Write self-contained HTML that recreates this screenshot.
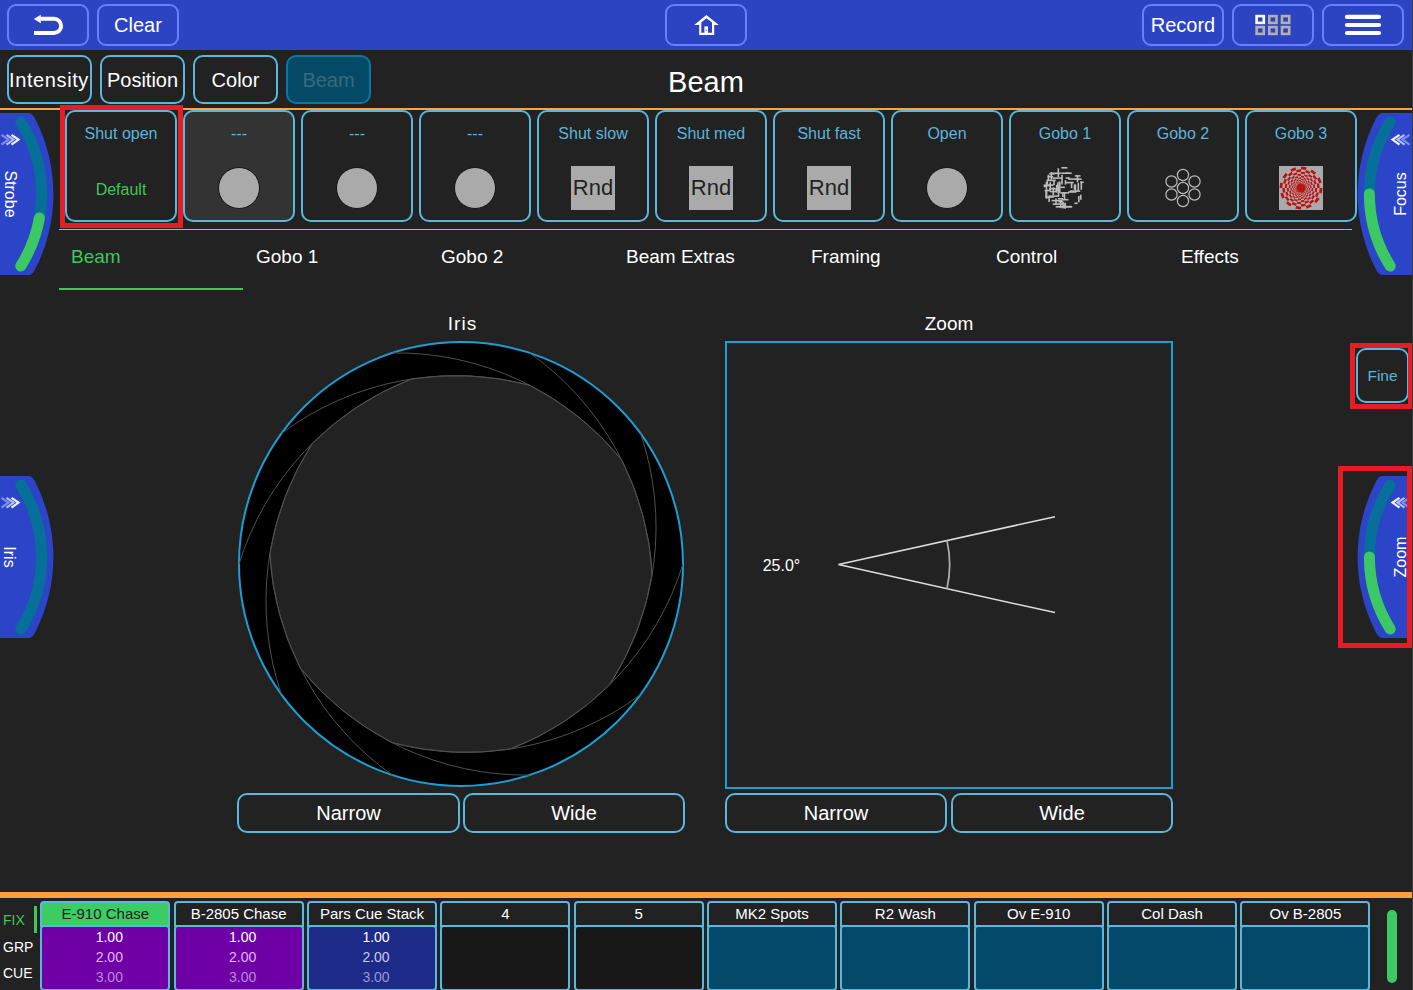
<!DOCTYPE html><html><head><meta charset="utf-8"><title>Beam</title><style>
*{margin:0;padding:0;box-sizing:border-box}
html,body{width:1413px;height:990px;overflow:hidden;background:#222222;font-family:"Liberation Sans",sans-serif;color:#fff}
.a{position:absolute}
.tb{position:absolute;top:4px;height:42px;border:2px solid #6680ff;border-radius:9px}
.tbt{position:absolute;top:0;height:38px;line-height:38px;width:100%;text-align:center;font-size:20px;color:#fff}
.cb{position:absolute;top:55px;height:49px;width:85px;border:2px solid #5ab8dc;border-radius:10px;text-align:center;line-height:47px;font-size:20px;color:#fff}
.tile{position:absolute;top:110px;width:112px;height:112px;border:2px solid #5ab8dc;border-radius:10px}
.tl{position:absolute;left:0;width:108px;top:13px;text-align:center;font-size:16px;color:#5ab4dc;line-height:18px}
.dot{position:absolute;left:33px;top:55px;width:42px;height:42px;border-radius:50%;background:#aaaaaa;border:1.5px solid #141414}
.rnd{position:absolute;left:32px;top:54px;width:44px;height:44px;background:#aaaaaa;color:#222;font-size:22px;line-height:44px;text-align:center}
.tab{position:absolute;top:244.5px;font-size:19px;line-height:24px;color:#fff}
.btn{position:absolute;top:793px;height:40px;border:2px solid #5ab8dc;border-radius:10px;text-align:center;line-height:36px;font-size:20px;color:#fff}
.red{position:absolute;border:5px solid #e81c24}
.pb{position:absolute;top:901px;width:130px;height:89px}
.ph{position:absolute;left:0;top:0;width:130px;height:26px;border:2px solid #5ab8dc;border-radius:4px 4px 0 0;background:#222;text-align:center;font-size:15px;line-height:22px;color:#fff}
.pbd{position:absolute;left:0;top:24px;width:130px;height:66px;border:2px solid #5ab8dc;border-radius:4px;background:#1a1a1a}
.vals{position:absolute;left:4px;top:0px;width:126px;text-align:center;font-size:14px;line-height:20px}
</style></head><body>
<div class="a" style="left:0;top:0;width:1413px;height:50px;background:#2c44c4"></div>
<div class="tb" style="left:7px;width:82px"><svg class="a" style="left:0;top:0" width="78" height="38" viewBox="9 6 78 38"><path d="M40.6 18.8 H54 A7.1 7.1 0 0 1 54 33 H34" fill="none" stroke="#fff" stroke-width="4"/><path d="M33.8 19.1 L40.8 14.8 L40.8 23.2 Z" fill="#fff"/></svg></div>
<div class="tb" style="left:97px;width:82px"><div class="tbt">Clear</div></div>
<div class="tb" style="left:665px;width:82px"><svg class="a" style="left:0;top:0" width="78" height="38" viewBox="667 6 78 38"><path fill-rule="evenodd" d="M694.2 24.9 L706.4 15 L718.8 24.9 L714.2 24.9 L714.2 35 L699.2 35 L699.2 24.9 Z M701.3 22.6 L706.4 18.3 L712 22.6 L712 32.8 L701.3 32.8 Z" fill="#fff"/><rect x="704.4" y="26.4" width="3.6" height="7" fill="#fff"/><rect x="705.8" y="29.6" width="1" height="1.2" fill="#2c44c4"/></svg></div>
<div class="tb" style="left:1142px;width:82px"><div class="tbt">Record</div></div>
<div class="tb" style="left:1232px;width:82px"><svg class="a" style="left:0;top:0" width="78" height="38" viewBox="1234 6 78 38"><rect x="1256.6" y="16.1" width="7.2" height="6.8" fill="none" stroke="#ffffff" stroke-width="2.6"/><rect x="1269.3" y="16.1" width="7.2" height="6.8" fill="none" stroke="#b4b0a8" stroke-width="2.6"/><rect x="1282.0" y="16.1" width="7.2" height="6.8" fill="none" stroke="#b4b0a8" stroke-width="2.6"/><rect x="1256.6" y="27.1" width="7.2" height="6.8" fill="none" stroke="#b4b0a8" stroke-width="2.6"/><rect x="1269.3" y="27.1" width="7.2" height="6.8" fill="none" stroke="#b4b0a8" stroke-width="2.6"/><rect x="1282.0" y="27.1" width="7.2" height="6.8" fill="none" stroke="#b4b0a8" stroke-width="2.6"/></svg></div>
<div class="tb" style="left:1322px;width:82px"><svg class="a" style="left:0;top:0" width="78" height="38" viewBox="1324 6 78 38"><path d="M1347 16.9 H1379 M1347 25 H1379 M1347 33 H1379" stroke="#fff" stroke-width="4.2" stroke-linecap="round"/></svg></div>
<div class="cb" style="left:7px;letter-spacing:0.6px;text-indent:-1px">Intensity</div>
<div class="cb" style="left:100px;">Position</div>
<div class="cb" style="left:193px;">Color</div>
<div class="cb" style="left:286px;background:#044a66;border-color:#0878a8;color:#3a6a7a;line-height:47px">Beam</div>
<div class="a" style="left:600px;top:65px;width:212px;text-align:center;font-size:29px;line-height:34px;color:#fff">Beam</div>
<div class="a" style="left:0;top:108px;width:1413px;height:2px;background:#ffa43e"></div>
<div class="a" style="left:59px;top:228.5px;width:1293px;height:1.5px;background:#ffa43e"></div>
<div class="tile" style="left:65px;"><div class="tl">Shut open</div><div class="tl" style="top:69px;color:#3cc85a">Default</div></div>
<div class="tile" style="left:183px;background:#333333;"><div class="tl">---</div><div class="dot"></div></div>
<div class="tile" style="left:301px;"><div class="tl">---</div><div class="dot"></div></div>
<div class="tile" style="left:419px;"><div class="tl">---</div><div class="dot"></div></div>
<div class="tile" style="left:537px;"><div class="tl">Shut slow</div><div class="rnd">Rnd</div></div>
<div class="tile" style="left:655px;"><div class="tl">Shut med</div><div class="rnd">Rnd</div></div>
<div class="tile" style="left:773px;"><div class="tl">Shut fast</div><div class="rnd">Rnd</div></div>
<div class="tile" style="left:891px;"><div class="tl">Open</div><div class="dot"></div></div>
<div class="tile" style="left:1009px;"><div class="tl">Gobo 1</div><svg class="a" style="left:30px;top:53px" width="46" height="46" viewBox="0 0 46 46"><g stroke="#bcbcbc" stroke-width="1.6"><path d="M11.3 8.3H19.9"/><path d="M24.5 15.2V19.6"/><path d="M2.7 20.2H5.8"/><path d="M17.4 36.7H22.3"/><path d="M24.3 41.8H31.2"/><path d="M35.6 14.2H40.6"/><path d="M15.0 33.6V38.9"/><path d="M24.9 17.6H32.8"/><path d="M30.6 16.9V23.1"/><path d="M21.0 9.8V19.4"/><path d="M12.3 22.3V30.0"/><path d="M27.2 14.1H38.1"/><path d="M17.0 33.8H22.1"/><path d="M29.0 26.1H39.2"/><path d="M27.2 27.0H35.2"/><path d="M21.9 27.7V32.1"/><path d="M36.5 10.6V17.3"/><path d="M2.6 21.4H5.5"/><path d="M7.4 9.7V15.8"/><path d="M5.4 16.9V24.8"/><path d="M33.4 38.3H36.7"/><path d="M11.7 39.1H22.4"/><path d="M6.6 11.7H12.2"/><path d="M24.7 13.0H28.8"/><path d="M17.5 20.5V31.1"/><path d="M19.3 27.9H28.0"/><path d="M39.8 29.7V34.8"/><path d="M18.5 16.4V21.1"/><path d="M8.2 8.8H14.0"/><path d="M6.3 15.2V19.4"/><path d="M24.9 8.2H30.7"/><path d="M17.3 3.3V12.1"/><path d="M19.3 22.3H23.9"/><path d="M11.5 13.1H21.3"/><path d="M20.3 8.2H28.1"/><path d="M24.2 38.1V43.5"/><path d="M13.0 14.8V20.0"/><path d="M21.2 34.7H27.5"/><path d="M37.8 31.0V37.2"/><path d="M8.3 23.7H14.8"/><path d="M7.5 31.1H18.2"/><path d="M39.3 17.3H42.7"/><path d="M10.3 6.9V14.8"/><path d="M37.3 17.9V26.4"/><path d="M5.6 24.6V33.8"/><path d="M33.5 19.5V24.7"/><path d="M10.6 35.6H21.4"/><path d="M14.7 41.8H23.4"/><path d="M8.1 31.3V37.1"/><path d="M14.3 25.0H19.2"/><path d="M24.1 37.7V43.5"/><path d="M33.8 10.9H39.5"/><path d="M9.2 26.6H15.0"/><path d="M16.9 17.2V25.3"/><path d="M19.7 36.8V43.2"/><path d="M20.4 2.8H26.4"/><path d="M9.2 17.3V26.4"/><path d="M15.7 19.8V27.7"/><path d="M3.6 25.5H9.3"/><path d="M34.4 19.4V27.3"/><path d="M40.3 16.5V24.8"/><path d="M23.5 27.5V34.7"/><path d="M22.1 37.1V43.5"/><path d="M20.6 41.6H30.4"/><path d="M4.9 20.6H9.4"/><path d="M5.1 25.4V32.9"/><path d="M4.6 32.1H12.8"/><path d="M18.7 17.0V27.9"/><path d="M5.0 20.1H12.6"/><path d="M5.7 15.4H14.7"/></g></svg></div>
<div class="tile" style="left:1127px;"><div class="tl">Gobo 2</div><svg class="a" style="left:31px;top:53px" width="46" height="46" viewBox="-23 -23 46 46"><circle cx="0.0" cy="0.0" r="5.6" fill="none" stroke="#bdbdbd" stroke-width="1.2"/><circle cx="0.0" cy="-13.0" r="5.6" fill="none" stroke="#bdbdbd" stroke-width="1.2"/><circle cx="0.0" cy="13.0" r="5.6" fill="none" stroke="#bdbdbd" stroke-width="1.2"/><circle cx="-11.5" cy="-6.5" r="5.6" fill="none" stroke="#bdbdbd" stroke-width="1.2"/><circle cx="11.5" cy="-6.5" r="5.6" fill="none" stroke="#bdbdbd" stroke-width="1.2"/><circle cx="-11.5" cy="6.5" r="5.6" fill="none" stroke="#bdbdbd" stroke-width="1.2"/><circle cx="11.5" cy="6.5" r="5.6" fill="none" stroke="#bdbdbd" stroke-width="1.2"/></svg></div>
<div class="tile" style="left:1245px;"><div class="tl">Gobo 3</div><svg class="a" style="left:32px;top:54px" width="44" height="44" viewBox="-22 -22 44 44"><rect x="-22" y="-22" width="44" height="44" fill="#aaaaaa"/><g fill="#c01010"><path d="M18.70 0.00L21.50 0.00L20.77 5.56L18.07 4.84Z"/><path d="M16.20 9.35L18.62 10.75L15.20 15.20L13.23 13.23Z"/><path d="M9.35 16.20L10.75 18.62L5.56 20.77L4.84 18.07Z"/><path d="M0.00 18.70L0.00 21.50L-5.56 20.77L-4.84 18.07Z"/><path d="M-9.35 16.20L-10.75 18.62L-15.20 15.20L-13.23 13.23Z"/><path d="M-16.20 9.35L-18.62 10.75L-20.77 5.56L-18.07 4.84Z"/><path d="M-18.70 0.00L-21.50 0.00L-20.77 -5.56L-18.07 -4.84Z"/><path d="M-16.20 -9.35L-18.62 -10.75L-15.20 -15.20L-13.23 -13.23Z"/><path d="M-9.35 -16.20L-10.75 -18.62L-5.56 -20.77L-4.84 -18.07Z"/><path d="M-0.00 -18.70L-0.00 -21.50L5.56 -20.77L4.84 -18.07Z"/><path d="M9.35 -16.20L10.75 -18.62L15.20 -15.20L13.23 -13.23Z"/><path d="M16.20 -9.35L18.62 -10.75L20.77 -5.56L18.07 -4.84Z"/><path d="M15.72 4.21L18.07 4.84L16.20 9.35L14.09 8.14Z"/><path d="M11.51 11.51L13.23 13.23L9.35 16.20L8.14 14.09Z"/><path d="M4.21 15.72L4.84 18.07L0.00 18.70L0.00 16.27Z"/><path d="M-4.21 15.72L-4.84 18.07L-9.35 16.20L-8.14 14.09Z"/><path d="M-11.51 11.51L-13.23 13.23L-16.20 9.35L-14.09 8.14Z"/><path d="M-15.72 4.21L-18.07 4.84L-18.70 0.00L-16.27 0.00Z"/><path d="M-15.72 -4.21L-18.07 -4.84L-16.20 -9.35L-14.09 -8.14Z"/><path d="M-11.51 -11.51L-13.23 -13.23L-9.35 -16.20L-8.14 -14.09Z"/><path d="M-4.21 -15.72L-4.84 -18.07L-0.00 -18.70L-0.00 -16.27Z"/><path d="M4.21 -15.72L4.84 -18.07L9.35 -16.20L8.14 -14.09Z"/><path d="M11.51 -11.51L13.23 -13.23L16.20 -9.35L14.09 -8.14Z"/><path d="M15.72 -4.21L18.07 -4.84L18.70 -0.00L16.27 -0.00Z"/><path d="M14.16 0.00L16.27 0.00L15.72 4.21L13.68 3.66Z"/><path d="M12.26 7.08L14.09 8.14L11.51 11.51L10.01 10.01Z"/><path d="M7.08 12.26L8.14 14.09L4.21 15.72L3.66 13.68Z"/><path d="M0.00 14.16L0.00 16.27L-4.21 15.72L-3.66 13.68Z"/><path d="M-7.08 12.26L-8.14 14.09L-11.51 11.51L-10.01 10.01Z"/><path d="M-12.26 7.08L-14.09 8.14L-15.72 4.21L-13.68 3.66Z"/><path d="M-14.16 0.00L-16.27 0.00L-15.72 -4.21L-13.68 -3.66Z"/><path d="M-12.26 -7.08L-14.09 -8.14L-11.51 -11.51L-10.01 -10.01Z"/><path d="M-7.08 -12.26L-8.14 -14.09L-4.21 -15.72L-3.66 -13.68Z"/><path d="M-0.00 -14.16L-0.00 -16.27L4.21 -15.72L3.66 -13.68Z"/><path d="M7.08 -12.26L8.14 -14.09L11.51 -11.51L10.01 -10.01Z"/><path d="M12.26 -7.08L14.09 -8.14L15.72 -4.21L13.68 -3.66Z"/><path d="M11.90 3.19L13.68 3.66L12.26 7.08L10.67 6.16Z"/><path d="M8.71 8.71L10.01 10.01L7.08 12.26L6.16 10.67Z"/><path d="M3.19 11.90L3.66 13.68L0.00 14.16L0.00 12.32Z"/><path d="M-3.19 11.90L-3.66 13.68L-7.08 12.26L-6.16 10.67Z"/><path d="M-8.71 8.71L-10.01 10.01L-12.26 7.08L-10.67 6.16Z"/><path d="M-11.90 3.19L-13.68 3.66L-14.16 0.00L-12.32 0.00Z"/><path d="M-11.90 -3.19L-13.68 -3.66L-12.26 -7.08L-10.67 -6.16Z"/><path d="M-8.71 -8.71L-10.01 -10.01L-7.08 -12.26L-6.16 -10.67Z"/><path d="M-3.19 -11.90L-3.66 -13.68L-0.00 -14.16L-0.00 -12.32Z"/><path d="M3.19 -11.90L3.66 -13.68L7.08 -12.26L6.16 -10.67Z"/><path d="M8.71 -8.71L10.01 -10.01L12.26 -7.08L10.67 -6.16Z"/><path d="M11.90 -3.19L13.68 -3.66L14.16 -0.00L12.32 -0.00Z"/><path d="M10.72 0.00L12.32 0.00L11.90 3.19L10.35 2.77Z"/><path d="M9.28 5.36L10.67 6.16L8.71 8.71L7.58 7.58Z"/><path d="M5.36 9.28L6.16 10.67L3.19 11.90L2.77 10.35Z"/><path d="M0.00 10.72L0.00 12.32L-3.19 11.90L-2.77 10.35Z"/><path d="M-5.36 9.28L-6.16 10.67L-8.71 8.71L-7.58 7.58Z"/><path d="M-9.28 5.36L-10.67 6.16L-11.90 3.19L-10.35 2.77Z"/><path d="M-10.72 0.00L-12.32 0.00L-11.90 -3.19L-10.35 -2.77Z"/><path d="M-9.28 -5.36L-10.67 -6.16L-8.71 -8.71L-7.58 -7.58Z"/><path d="M-5.36 -9.28L-6.16 -10.67L-3.19 -11.90L-2.77 -10.35Z"/><path d="M-0.00 -10.72L-0.00 -12.32L3.19 -11.90L2.77 -10.35Z"/><path d="M5.36 -9.28L6.16 -10.67L8.71 -8.71L7.58 -7.58Z"/><path d="M9.28 -5.36L10.67 -6.16L11.90 -3.19L10.35 -2.77Z"/><path d="M9.01 2.41L10.35 2.77L9.28 5.36L8.07 4.66Z"/><path d="M6.59 6.59L7.58 7.58L5.36 9.28L4.66 8.07Z"/><path d="M2.41 9.01L2.77 10.35L0.00 10.72L0.00 9.32Z"/><path d="M-2.41 9.01L-2.77 10.35L-5.36 9.28L-4.66 8.07Z"/><path d="M-6.59 6.59L-7.58 7.58L-9.28 5.36L-8.07 4.66Z"/><path d="M-9.01 2.41L-10.35 2.77L-10.72 0.00L-9.32 0.00Z"/><path d="M-9.01 -2.41L-10.35 -2.77L-9.28 -5.36L-8.07 -4.66Z"/><path d="M-6.59 -6.59L-7.58 -7.58L-5.36 -9.28L-4.66 -8.07Z"/><path d="M-2.41 -9.01L-2.77 -10.35L-0.00 -10.72L-0.00 -9.32Z"/><path d="M2.41 -9.01L2.77 -10.35L5.36 -9.28L4.66 -8.07Z"/><path d="M6.59 -6.59L7.58 -7.58L9.28 -5.36L8.07 -4.66Z"/><path d="M9.01 -2.41L10.35 -2.77L10.72 -0.00L9.32 -0.00Z"/><path d="M8.11 0.00L9.32 0.00L9.01 2.41L7.83 2.10Z"/><path d="M7.02 4.06L8.07 4.66L6.59 6.59L5.74 5.74Z"/><path d="M4.06 7.02L4.66 8.07L2.41 9.01L2.10 7.83Z"/><path d="M0.00 8.11L0.00 9.32L-2.41 9.01L-2.10 7.83Z"/><path d="M-4.06 7.02L-4.66 8.07L-6.59 6.59L-5.74 5.74Z"/><path d="M-7.02 4.06L-8.07 4.66L-9.01 2.41L-7.83 2.10Z"/><path d="M-8.11 0.00L-9.32 0.00L-9.01 -2.41L-7.83 -2.10Z"/><path d="M-7.02 -4.06L-8.07 -4.66L-6.59 -6.59L-5.74 -5.74Z"/><path d="M-4.06 -7.02L-4.66 -8.07L-2.41 -9.01L-2.10 -7.83Z"/><path d="M-0.00 -8.11L-0.00 -9.32L2.41 -9.01L2.10 -7.83Z"/><path d="M4.06 -7.02L4.66 -8.07L6.59 -6.59L5.74 -5.74Z"/><path d="M7.02 -4.06L8.07 -4.66L9.01 -2.41L7.83 -2.10Z"/><path d="M6.82 1.83L7.83 2.10L7.02 4.06L6.11 3.53Z"/><path d="M4.99 4.99L5.74 5.74L4.06 7.02L3.53 6.11Z"/><path d="M1.83 6.82L2.10 7.83L0.00 8.11L0.00 7.06Z"/><path d="M-1.83 6.82L-2.10 7.83L-4.06 7.02L-3.53 6.11Z"/><path d="M-4.99 4.99L-5.74 5.74L-7.02 4.06L-6.11 3.53Z"/><path d="M-6.82 1.83L-7.83 2.10L-8.11 0.00L-7.06 0.00Z"/><path d="M-6.82 -1.83L-7.83 -2.10L-7.02 -4.06L-6.11 -3.53Z"/><path d="M-4.99 -4.99L-5.74 -5.74L-4.06 -7.02L-3.53 -6.11Z"/><path d="M-1.83 -6.82L-2.10 -7.83L-0.00 -8.11L-0.00 -7.06Z"/><path d="M1.83 -6.82L2.10 -7.83L4.06 -7.02L3.53 -6.11Z"/><path d="M4.99 -4.99L5.74 -5.74L7.02 -4.06L6.11 -3.53Z"/><path d="M6.82 -1.83L7.83 -2.10L8.11 -0.00L7.06 -0.00Z"/><path d="M6.14 0.00L7.06 0.00L6.82 1.83L5.93 1.59Z"/><path d="M5.32 3.07L6.11 3.53L4.99 4.99L4.34 4.34Z"/><path d="M3.07 5.32L3.53 6.11L1.83 6.82L1.59 5.93Z"/><path d="M0.00 6.14L0.00 7.06L-1.83 6.82L-1.59 5.93Z"/><path d="M-3.07 5.32L-3.53 6.11L-4.99 4.99L-4.34 4.34Z"/><path d="M-5.32 3.07L-6.11 3.53L-6.82 1.83L-5.93 1.59Z"/><path d="M-6.14 0.00L-7.06 0.00L-6.82 -1.83L-5.93 -1.59Z"/><path d="M-5.32 -3.07L-6.11 -3.53L-4.99 -4.99L-4.34 -4.34Z"/><path d="M-3.07 -5.32L-3.53 -6.11L-1.83 -6.82L-1.59 -5.93Z"/><path d="M-0.00 -6.14L-0.00 -7.06L1.83 -6.82L1.59 -5.93Z"/><path d="M3.07 -5.32L3.53 -6.11L4.99 -4.99L4.34 -4.34Z"/><path d="M5.32 -3.07L6.11 -3.53L6.82 -1.83L5.93 -1.59Z"/><path d="M5.16 1.38L5.93 1.59L5.32 3.07L4.63 2.67Z"/><path d="M3.78 3.78L4.34 4.34L3.07 5.32L2.67 4.63Z"/><path d="M1.38 5.16L1.59 5.93L0.00 6.14L0.00 5.34Z"/><path d="M-1.38 5.16L-1.59 5.93L-3.07 5.32L-2.67 4.63Z"/><path d="M-3.78 3.78L-4.34 4.34L-5.32 3.07L-4.63 2.67Z"/><path d="M-5.16 1.38L-5.93 1.59L-6.14 0.00L-5.34 0.00Z"/><path d="M-5.16 -1.38L-5.93 -1.59L-5.32 -3.07L-4.63 -2.67Z"/><path d="M-3.78 -3.78L-4.34 -4.34L-3.07 -5.32L-2.67 -4.63Z"/><path d="M-1.38 -5.16L-1.59 -5.93L-0.00 -6.14L-0.00 -5.34Z"/><path d="M1.38 -5.16L1.59 -5.93L3.07 -5.32L2.67 -4.63Z"/><path d="M3.78 -3.78L4.34 -4.34L5.32 -3.07L4.63 -2.67Z"/><path d="M5.16 -1.38L5.93 -1.59L6.14 -0.00L5.34 -0.00Z"/><path d="M4.65 0.00L5.34 0.00L5.16 1.38L4.49 1.20Z"/><path d="M4.02 2.32L4.63 2.67L3.78 3.78L3.29 3.29Z"/><path d="M2.32 4.02L2.67 4.63L1.38 5.16L1.20 4.49Z"/><path d="M0.00 4.65L0.00 5.34L-1.38 5.16L-1.20 4.49Z"/><path d="M-2.32 4.02L-2.67 4.63L-3.78 3.78L-3.29 3.29Z"/><path d="M-4.02 2.32L-4.63 2.67L-5.16 1.38L-4.49 1.20Z"/><path d="M-4.65 0.00L-5.34 0.00L-5.16 -1.38L-4.49 -1.20Z"/><path d="M-4.02 -2.32L-4.63 -2.67L-3.78 -3.78L-3.29 -3.29Z"/><path d="M-2.32 -4.02L-2.67 -4.63L-1.38 -5.16L-1.20 -4.49Z"/><path d="M-0.00 -4.65L-0.00 -5.34L1.38 -5.16L1.20 -4.49Z"/><path d="M2.32 -4.02L2.67 -4.63L3.78 -3.78L3.29 -3.29Z"/><path d="M4.02 -2.32L4.63 -2.67L5.16 -1.38L4.49 -1.20Z"/><path d="M3.90 1.05L4.49 1.20L4.02 2.32L3.50 2.02Z"/><path d="M2.86 2.86L3.29 3.29L2.32 4.02L2.02 3.50Z"/><path d="M1.05 3.90L1.20 4.49L0.00 4.65L0.00 4.04Z"/><path d="M-1.05 3.90L-1.20 4.49L-2.32 4.02L-2.02 3.50Z"/><path d="M-2.86 2.86L-3.29 3.29L-4.02 2.32L-3.50 2.02Z"/><path d="M-3.90 1.05L-4.49 1.20L-4.65 0.00L-4.04 0.00Z"/><path d="M-3.90 -1.05L-4.49 -1.20L-4.02 -2.32L-3.50 -2.02Z"/><path d="M-2.86 -2.86L-3.29 -3.29L-2.32 -4.02L-2.02 -3.50Z"/><path d="M-1.05 -3.90L-1.20 -4.49L-0.00 -4.65L-0.00 -4.04Z"/><path d="M1.05 -3.90L1.20 -4.49L2.32 -4.02L2.02 -3.50Z"/><path d="M2.86 -2.86L3.29 -3.29L4.02 -2.32L3.50 -2.02Z"/><path d="M3.90 -1.05L4.49 -1.20L4.65 -0.00L4.04 -0.00Z"/><path d="M3.52 0.00L4.04 0.00L3.90 1.05L3.40 0.91Z"/><path d="M3.05 1.76L3.50 2.02L2.86 2.86L2.49 2.49Z"/><path d="M1.76 3.05L2.02 3.50L1.05 3.90L0.91 3.40Z"/><path d="M0.00 3.52L0.00 4.04L-1.05 3.90L-0.91 3.40Z"/><path d="M-1.76 3.05L-2.02 3.50L-2.86 2.86L-2.49 2.49Z"/><path d="M-3.05 1.76L-3.50 2.02L-3.90 1.05L-3.40 0.91Z"/><path d="M-3.52 0.00L-4.04 0.00L-3.90 -1.05L-3.40 -0.91Z"/><path d="M-3.05 -1.76L-3.50 -2.02L-2.86 -2.86L-2.49 -2.49Z"/><path d="M-1.76 -3.05L-2.02 -3.50L-1.05 -3.90L-0.91 -3.40Z"/><path d="M-0.00 -3.52L-0.00 -4.04L1.05 -3.90L0.91 -3.40Z"/><path d="M1.76 -3.05L2.02 -3.50L2.86 -2.86L2.49 -2.49Z"/><path d="M3.05 -1.76L3.50 -2.02L3.90 -1.05L3.40 -0.91Z"/><path d="M2.96 0.79L3.40 0.91L3.05 1.76L2.65 1.53Z"/><path d="M2.16 2.16L2.49 2.49L1.76 3.05L1.53 2.65Z"/><path d="M0.79 2.96L0.91 3.40L0.00 3.52L0.00 3.06Z"/><path d="M-0.79 2.96L-0.91 3.40L-1.76 3.05L-1.53 2.65Z"/><path d="M-2.16 2.16L-2.49 2.49L-3.05 1.76L-2.65 1.53Z"/><path d="M-2.96 0.79L-3.40 0.91L-3.52 0.00L-3.06 0.00Z"/><path d="M-2.96 -0.79L-3.40 -0.91L-3.05 -1.76L-2.65 -1.53Z"/><path d="M-2.16 -2.16L-2.49 -2.49L-1.76 -3.05L-1.53 -2.65Z"/><path d="M-0.79 -2.96L-0.91 -3.40L-0.00 -3.52L-0.00 -3.06Z"/><path d="M0.79 -2.96L0.91 -3.40L1.76 -3.05L1.53 -2.65Z"/><path d="M2.16 -2.16L2.49 -2.49L3.05 -1.76L2.65 -1.53Z"/><path d="M2.96 -0.79L3.40 -0.91L3.52 -0.00L3.06 -0.00Z"/><path d="M2.66 0.00L3.06 0.00L2.96 0.79L2.57 0.69Z"/><path d="M2.31 1.33L2.65 1.53L2.16 2.16L1.88 1.88Z"/><path d="M1.33 2.31L1.53 2.65L0.79 2.96L0.69 2.57Z"/><path d="M0.00 2.66L0.00 3.06L-0.79 2.96L-0.69 2.57Z"/><path d="M-1.33 2.31L-1.53 2.65L-2.16 2.16L-1.88 1.88Z"/><path d="M-2.31 1.33L-2.65 1.53L-2.96 0.79L-2.57 0.69Z"/><path d="M-2.66 0.00L-3.06 0.00L-2.96 -0.79L-2.57 -0.69Z"/><path d="M-2.31 -1.33L-2.65 -1.53L-2.16 -2.16L-1.88 -1.88Z"/><path d="M-1.33 -2.31L-1.53 -2.65L-0.79 -2.96L-0.69 -2.57Z"/><path d="M-0.00 -2.66L-0.00 -3.06L0.79 -2.96L0.69 -2.57Z"/><path d="M1.33 -2.31L1.53 -2.65L2.16 -2.16L1.88 -1.88Z"/><path d="M2.31 -1.33L2.65 -1.53L2.96 -0.79L2.57 -0.69Z"/><path d="M2.24 0.60L2.57 0.69L2.31 1.33L2.01 1.16Z"/><path d="M1.64 1.64L1.88 1.88L1.33 2.31L1.16 2.01Z"/><path d="M0.60 2.24L0.69 2.57L0.00 2.66L0.00 2.32Z"/><path d="M-0.60 2.24L-0.69 2.57L-1.33 2.31L-1.16 2.01Z"/><path d="M-1.64 1.64L-1.88 1.88L-2.31 1.33L-2.01 1.16Z"/><path d="M-2.24 0.60L-2.57 0.69L-2.66 0.00L-2.32 0.00Z"/><path d="M-2.24 -0.60L-2.57 -0.69L-2.31 -1.33L-2.01 -1.16Z"/><path d="M-1.64 -1.64L-1.88 -1.88L-1.33 -2.31L-1.16 -2.01Z"/><path d="M-0.60 -2.24L-0.69 -2.57L-0.00 -2.66L-0.00 -2.32Z"/><path d="M0.60 -2.24L0.69 -2.57L1.33 -2.31L1.16 -2.01Z"/><path d="M1.64 -1.64L1.88 -1.88L2.31 -1.33L2.01 -1.16Z"/><path d="M2.24 -0.60L2.57 -0.69L2.66 -0.00L2.32 -0.00Z"/><path d="M2.01 0.00L2.32 0.00L2.24 0.60L1.95 0.52Z"/><path d="M1.75 1.01L2.01 1.16L1.64 1.64L1.42 1.42Z"/><path d="M1.01 1.75L1.16 2.01L0.60 2.24L0.52 1.95Z"/><path d="M0.00 2.01L0.00 2.32L-0.60 2.24L-0.52 1.95Z"/><path d="M-1.01 1.75L-1.16 2.01L-1.64 1.64L-1.42 1.42Z"/><path d="M-1.75 1.01L-2.01 1.16L-2.24 0.60L-1.95 0.52Z"/><path d="M-2.01 0.00L-2.32 0.00L-2.24 -0.60L-1.95 -0.52Z"/><path d="M-1.75 -1.01L-2.01 -1.16L-1.64 -1.64L-1.42 -1.42Z"/><path d="M-1.01 -1.75L-1.16 -2.01L-0.60 -2.24L-0.52 -1.95Z"/><path d="M-0.00 -2.01L-0.00 -2.32L0.60 -2.24L0.52 -1.95Z"/><path d="M1.01 -1.75L1.16 -2.01L1.64 -1.64L1.42 -1.42Z"/><path d="M1.75 -1.01L2.01 -1.16L2.24 -0.60L1.95 -0.52Z"/><path d="M1.69 0.45L1.95 0.52L1.75 1.01L1.52 0.88Z"/><path d="M1.24 1.24L1.42 1.42L1.01 1.75L0.88 1.52Z"/><path d="M0.45 1.69L0.52 1.95L0.00 2.01L0.00 1.75Z"/><path d="M-0.45 1.69L-0.52 1.95L-1.01 1.75L-0.88 1.52Z"/><path d="M-1.24 1.24L-1.42 1.42L-1.75 1.01L-1.52 0.88Z"/><path d="M-1.69 0.45L-1.95 0.52L-2.01 0.00L-1.75 0.00Z"/><path d="M-1.69 -0.45L-1.95 -0.52L-1.75 -1.01L-1.52 -0.88Z"/><path d="M-1.24 -1.24L-1.42 -1.42L-1.01 -1.75L-0.88 -1.52Z"/><path d="M-0.45 -1.69L-0.52 -1.95L-0.00 -2.01L-0.00 -1.75Z"/><path d="M0.45 -1.69L0.52 -1.95L1.01 -1.75L0.88 -1.52Z"/><path d="M1.24 -1.24L1.42 -1.42L1.75 -1.01L1.52 -0.88Z"/><path d="M1.69 -0.45L1.95 -0.52L2.01 -0.00L1.75 -0.00Z"/><path d="M1.53 0.00L1.75 0.00L1.69 0.45L1.47 0.39Z"/><path d="M1.32 0.76L1.52 0.88L1.24 1.24L1.08 1.08Z"/><path d="M0.76 1.32L0.88 1.52L0.45 1.69L0.39 1.47Z"/><path d="M0.00 1.53L0.00 1.75L-0.45 1.69L-0.39 1.47Z"/><path d="M-0.76 1.32L-0.88 1.52L-1.24 1.24L-1.08 1.08Z"/><path d="M-1.32 0.76L-1.52 0.88L-1.69 0.45L-1.47 0.39Z"/><path d="M-1.53 0.00L-1.75 0.00L-1.69 -0.45L-1.47 -0.39Z"/><path d="M-1.32 -0.76L-1.52 -0.88L-1.24 -1.24L-1.08 -1.08Z"/><path d="M-0.76 -1.32L-0.88 -1.52L-0.45 -1.69L-0.39 -1.47Z"/><path d="M-0.00 -1.53L-0.00 -1.75L0.45 -1.69L0.39 -1.47Z"/><path d="M0.76 -1.32L0.88 -1.52L1.24 -1.24L1.08 -1.08Z"/><path d="M1.32 -0.76L1.52 -0.88L1.69 -0.45L1.47 -0.39Z"/><path d="M1.28 0.34L1.47 0.39L1.32 0.76L1.15 0.66Z"/><path d="M0.94 0.94L1.08 1.08L0.76 1.32L0.66 1.15Z"/><path d="M0.34 1.28L0.39 1.47L0.00 1.53L0.00 1.33Z"/><path d="M-0.34 1.28L-0.39 1.47L-0.76 1.32L-0.66 1.15Z"/><path d="M-0.94 0.94L-1.08 1.08L-1.32 0.76L-1.15 0.66Z"/><path d="M-1.28 0.34L-1.47 0.39L-1.53 0.00L-1.33 0.00Z"/><path d="M-1.28 -0.34L-1.47 -0.39L-1.32 -0.76L-1.15 -0.66Z"/><path d="M-0.94 -0.94L-1.08 -1.08L-0.76 -1.32L-0.66 -1.15Z"/><path d="M-0.34 -1.28L-0.39 -1.47L-0.00 -1.53L-0.00 -1.33Z"/><path d="M0.34 -1.28L0.39 -1.47L0.76 -1.32L0.66 -1.15Z"/><path d="M0.94 -0.94L1.08 -1.08L1.32 -0.76L1.15 -0.66Z"/><path d="M1.28 -0.34L1.47 -0.39L1.53 -0.00L1.33 -0.00Z"/><path d="M1.15 0.00L1.33 0.00L1.28 0.34L1.12 0.30Z"/><path d="M1.00 0.58L1.15 0.66L0.94 0.94L0.82 0.82Z"/><path d="M0.58 1.00L0.66 1.15L0.34 1.28L0.30 1.12Z"/><path d="M0.00 1.15L0.00 1.33L-0.34 1.28L-0.30 1.12Z"/><path d="M-0.58 1.00L-0.66 1.15L-0.94 0.94L-0.82 0.82Z"/><path d="M-1.00 0.58L-1.15 0.66L-1.28 0.34L-1.12 0.30Z"/><path d="M-1.15 0.00L-1.33 0.00L-1.28 -0.34L-1.12 -0.30Z"/><path d="M-1.00 -0.58L-1.15 -0.66L-0.94 -0.94L-0.82 -0.82Z"/><path d="M-0.58 -1.00L-0.66 -1.15L-0.34 -1.28L-0.30 -1.12Z"/><path d="M-0.00 -1.15L-0.00 -1.33L0.34 -1.28L0.30 -1.12Z"/><path d="M0.58 -1.00L0.66 -1.15L0.94 -0.94L0.82 -0.82Z"/><path d="M1.00 -0.58L1.15 -0.66L1.28 -0.34L1.12 -0.30Z"/><circle r="4.6" fill="#b81414"/></g></svg></div>
<div class="tab" style="left:71px;color:#3cc85a">Beam</div>
<div class="tab" style="left:256px;color:#fff">Gobo 1</div>
<div class="tab" style="left:441px;color:#fff">Gobo 2</div>
<div class="tab" style="left:626px;color:#fff">Beam Extras</div>
<div class="tab" style="left:811px;color:#fff">Framing</div>
<div class="tab" style="left:996px;color:#fff">Control</div>
<div class="tab" style="left:1181px;color:#fff">Effects</div>
<div class="a" style="left:59px;top:287.5px;width:184px;height:2.5px;background:#3cc85a"></div>
<div class="a" style="left:362px;top:312px;width:200px;text-align:center;font-size:19px;line-height:24px;letter-spacing:1px;text-indent:1px">Iris</div>
<svg class="a" style="left:0;top:0" width="1413" height="990"><circle cx="461" cy="564" r="222" fill="#000" stroke="#1c9ed2" stroke-width="2"/><path d="M510.6 749.0 A291.2 291.2 0 0 1 392.4 742.8 A291.2 291.2 0 0 1 300.4 668.3 A291.2 291.2 0 0 1 269.8 554.0 A291.2 291.2 0 0 1 312.2 443.5 A291.2 291.2 0 0 1 411.4 379.0 A291.2 291.2 0 0 1 529.6 385.2 A291.2 291.2 0 0 1 621.6 459.7 A291.2 291.2 0 0 1 652.2 574.0 A291.2 291.2 0 0 1 609.8 684.5 A291.2 291.2 0 0 1 510.6 749.0 Z" fill="#222222" stroke="#505050" stroke-width="1"/><path d="M683.0 564.0 A291.2 291.2 0 0 1 510.6 749.0 M640.6 694.5 A291.2 291.2 0 0 1 392.4 742.8 M529.6 775.1 A291.2 291.2 0 0 1 300.4 668.3 M392.4 775.1 A291.2 291.2 0 0 1 269.8 554.0 M281.4 694.5 A291.2 291.2 0 0 1 312.2 443.5 M239.0 564.0 A291.2 291.2 0 0 1 411.4 379.0 M281.4 433.5 A291.2 291.2 0 0 1 529.6 385.2 M392.4 352.9 A291.2 291.2 0 0 1 621.6 459.7 M529.6 352.9 A291.2 291.2 0 0 1 652.2 574.0 M640.6 433.5 A291.2 291.2 0 0 1 609.8 684.5" fill="none" stroke="#505050" stroke-width="1"/></svg>
<div class="a" style="left:849px;top:312px;width:200px;text-align:center;font-size:19px;line-height:24px">Zoom</div>
<div class="a" style="left:725px;top:341px;width:448px;height:448px;border:2px solid #1c9ed2"></div>
<svg class="a" style="left:0;top:0" width="1413" height="990"><path d="M1055 516.7 L838.5 564.6 L1055 612.6" fill="none" stroke="#dddddd" stroke-width="1.5"/><path d="M947 540.6 A110.6 110.6 0 0 1 947 588.6" fill="none" stroke="#aaaaaa" stroke-width="1.8"/></svg>
<div class="a" style="left:741.5px;top:556px;width:80px;text-align:center;font-size:16px;line-height:20px">25.0°</div>
<div class="btn" style="left:237px;width:223px">Narrow</div>
<div class="btn" style="left:463px;width:222px">Wide</div>
<div class="btn" style="left:725px;width:222px">Narrow</div>
<div class="btn" style="left:951px;width:222px">Wide</div>
<svg class="a" style="left:0;top:113px" width="60" height="164" viewBox="0 0 60 164"><g><path d="M0 0 H28.5 Q32 0 34.8 5 A164.6 164.6 0 0 1 34.8 157 Q32 162 28.5 162 H0 Z" fill="#2c44c8"/><path d="M20.8 9 A135 135 0 0 1 20.8 153" fill="none" stroke="#077098" stroke-width="11" stroke-linecap="round"/><path d="M39.4 105 A135 135 0 0 1 20.8 153" fill="none" stroke="#3cc864" stroke-width="11" stroke-linecap="round"/><path d="M1.5 134.8 L8.5 139.6 L1.5 144.6" fill="none" stroke="#7f8ee8" stroke-width="2.2" transform="translate(0,-113)"/><path d="M6.5 134.8 L13.5 139.6 L6.5 144.6" fill="none" stroke="#b4bdf2" stroke-width="2.2" transform="translate(0,-113)"/><path d="M11.5 134.8 L18.5 139.6 L11.5 144.6" fill="none" stroke="#f0f2ff" stroke-width="2.2" transform="translate(0,-113)"/></g></svg>
<svg class="a" style="left:0;top:476px" width="60" height="164" viewBox="0 0 60 164"><g><path d="M0 0 H28.5 Q32 0 34.8 5 A164.6 164.6 0 0 1 34.8 157 Q32 162 28.5 162 H0 Z" fill="#2c44c8"/><path d="M20.8 9 A135 135 0 0 1 20.8 153" fill="none" stroke="#077098" stroke-width="11" stroke-linecap="round"/><path d="M1.5 134.8 L8.5 139.6 L1.5 144.6" fill="none" stroke="#7f8ee8" stroke-width="2.2" transform="translate(0,-113)"/><path d="M6.5 134.8 L13.5 139.6 L6.5 144.6" fill="none" stroke="#b4bdf2" stroke-width="2.2" transform="translate(0,-113)"/><path d="M11.5 134.8 L18.5 139.6 L11.5 144.6" fill="none" stroke="#f0f2ff" stroke-width="2.2" transform="translate(0,-113)"/></g></svg>
<svg class="a" style="left:1353px;top:113px" width="60" height="164" viewBox="0 0 60 164"><rect x="50" y="0" width="9" height="162" fill="#2c44c8"/><g transform="translate(58,0) scale(-1,1)"><path d="M0 0 H28.5 Q32 0 34.8 5 A164.6 164.6 0 0 1 34.8 157 Q32 162 28.5 162 H0 Z" fill="#2c44c8"/><path d="M20.8 9 A135 135 0 0 1 20.8 153" fill="none" stroke="#077098" stroke-width="11" stroke-linecap="round"/><path d="M41.6 81 A135 135 0 0 1 20.8 153" fill="none" stroke="#3cc864" stroke-width="11" stroke-linecap="round"/><path d="M1.5 134.8 L8.5 139.6 L1.5 144.6" fill="none" stroke="#7f8ee8" stroke-width="2.2" transform="translate(0,-113)"/><path d="M6.5 134.8 L13.5 139.6 L6.5 144.6" fill="none" stroke="#b4bdf2" stroke-width="2.2" transform="translate(0,-113)"/><path d="M11.5 134.8 L18.5 139.6 L11.5 144.6" fill="none" stroke="#f0f2ff" stroke-width="2.2" transform="translate(0,-113)"/></g></svg>
<svg class="a" style="left:1353px;top:476px" width="60" height="164" viewBox="0 0 60 164"><rect x="50" y="0" width="9" height="162" fill="#2c44c8"/><g transform="translate(58,0) scale(-1,1)"><path d="M0 0 H28.5 Q32 0 34.8 5 A164.6 164.6 0 0 1 34.8 157 Q32 162 28.5 162 H0 Z" fill="#2c44c8"/><path d="M20.8 9 A135 135 0 0 1 20.8 153" fill="none" stroke="#077098" stroke-width="11" stroke-linecap="round"/><path d="M41.6 81 A135 135 0 0 1 20.8 153" fill="none" stroke="#3cc864" stroke-width="11" stroke-linecap="round"/><path d="M1.5 134.8 L8.5 139.6 L1.5 144.6" fill="none" stroke="#7f8ee8" stroke-width="2.2" transform="translate(0,-113)"/><path d="M6.5 134.8 L13.5 139.6 L6.5 144.6" fill="none" stroke="#b4bdf2" stroke-width="2.2" transform="translate(0,-113)"/><path d="M11.5 134.8 L18.5 139.6 L11.5 144.6" fill="none" stroke="#f0f2ff" stroke-width="2.2" transform="translate(0,-113)"/></g></svg>
<div class="a" style="left:-30.5px;top:183.5px;width:80px;height:20px;text-align:center;font-size:16px;line-height:20px;transform:rotate(90deg)">Strobe</div>
<div class="a" style="left:-31.5px;top:547.0px;width:80px;height:20px;text-align:center;font-size:16px;line-height:20px;transform:rotate(90deg)">Iris</div>
<div class="a" style="left:1361.0px;top:183.5px;width:80px;height:20px;text-align:center;font-size:16px;line-height:20px;transform:rotate(-90deg)">Focus</div>
<div class="a" style="left:1360.5px;top:547.0px;width:80px;height:20px;text-align:center;font-size:16px;line-height:20px;transform:rotate(-90deg)">Zoom</div>
<div class="a" style="left:1356px;top:348px;width:53px;height:55px;border:2px solid #5ab8dc;border-radius:10px;font-size:15.5px;line-height:51px;color:#5ab4dc;text-align:center">Fine</div>
<div class="red" style="left:60px;top:105px;width:123px;height:123px"></div>
<div class="red" style="left:1350px;top:343px;width:63px;height:66px"></div>
<div class="red" style="left:1338px;top:466px;width:74px;height:182px"></div>
<div class="a" style="left:0;top:892px;width:1412px;height:6px;background:#ffa040"></div>
<div class="a" style="left:3px;top:910px;font-size:14px;line-height:20px;color:#3cc85a">FIX</div>
<div class="a" style="left:3px;top:936.5px;font-size:14px;line-height:20px">GRP</div>
<div class="a" style="left:3px;top:963px;font-size:14px;line-height:20px">CUE</div>
<div class="a" style="left:34px;top:906px;width:2.5px;height:27px;background:#3cc85a"></div>
<div class="pb" style="left:40.3px"><div class="pbd" style="background:#6f00a6"><div class="vals"><div style="color:#fff">1.00</div><div style="color:#e0b8f0">2.00</div><div style="color:#b88ad8">3.00</div></div></div><div class="ph" style="background:#3ccc64;color:#222">E-910 Chase</div></div>
<div class="pb" style="left:173.6px"><div class="pbd" style="background:#6f00a6"><div class="vals"><div style="color:#fff">1.00</div><div style="color:#e0b8f0">2.00</div><div style="color:#b88ad8">3.00</div></div></div><div class="ph" style="background:#222;color:#fff">B-2805 Chase</div></div>
<div class="pb" style="left:307.0px"><div class="pbd" style="background:#1e2a88"><div class="vals"><div style="color:#fff">1.00</div><div style="color:#c8c8f0">2.00</div><div style="color:#9898d0">3.00</div></div></div><div class="ph" style="background:#222;color:#fff">Pars Cue Stack</div></div>
<div class="pb" style="left:440.3px"><div class="pbd" style="background:#181818"></div><div class="ph" style="background:#222;color:#fff">4</div></div>
<div class="pb" style="left:573.7px"><div class="pbd" style="background:#181818"></div><div class="ph" style="background:#222;color:#fff">5</div></div>
<div class="pb" style="left:707.0px"><div class="pbd" style="background:#04486a"></div><div class="ph" style="background:#222;color:#fff">MK2 Spots</div></div>
<div class="pb" style="left:840.4px"><div class="pbd" style="background:#04486a"></div><div class="ph" style="background:#222;color:#fff">R2 Wash</div></div>
<div class="pb" style="left:973.7px"><div class="pbd" style="background:#04486a"></div><div class="ph" style="background:#222;color:#fff">Ov E-910</div></div>
<div class="pb" style="left:1107.1px"><div class="pbd" style="background:#04486a"></div><div class="ph" style="background:#222;color:#fff">Col Dash</div></div>
<div class="pb" style="left:1240.4px"><div class="pbd" style="background:#04486a"></div><div class="ph" style="background:#222;color:#fff">Ov B-2805</div></div>
<div class="a" style="left:1387px;top:910px;width:10px;height:73px;border-radius:5px;background:#3cc864"></div>
<div class="a" style="left:1412px;top:0;width:1px;height:990px;background:#3a3a3a"></div>
</body></html>
